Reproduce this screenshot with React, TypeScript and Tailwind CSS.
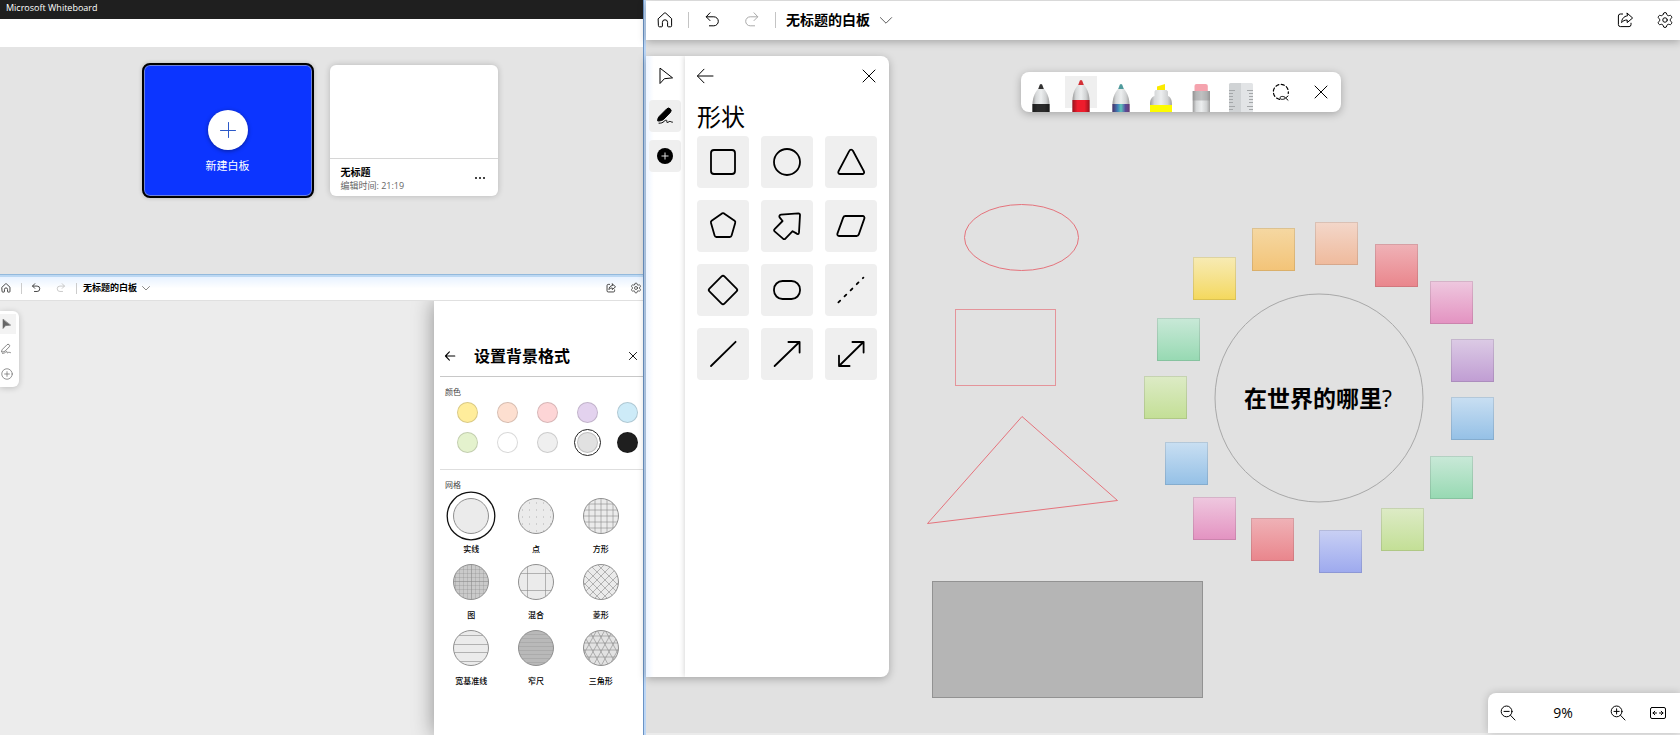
import * as React from "react";
import { Settings } from "lucide-react";

interface IconProps {
  className?: string;
}

interface Note {
  x: number;
  y: number;
  color: string;
}

const NOTE_COLORS = {
  orange: "from-[#f5d8a2] to-[#f3c377]",
  peach: "from-[#f3d7ca] to-[#efba9c]",
  red: "from-[#efb2b7] to-[#e9858c]",
  pink: "from-[#eec8df] to-[#e392c1]",
  purple: "from-[#dccbe5] to-[#c09dd3]",
  blue: "from-[#c9dff2] to-[#94c0e6]",
  green: "from-[#c9e9d8] to-[#96d9b2]",
  lime: "from-[#ddebc6] to-[#c3df95]",
  indigo: "from-[#c9d0f4] to-[#9da9ee]",
  yellow: "from-[#f7ebb4] to-[#f4d85a]",
};

// positions on the board, measured from its top left corner
const NOTES: Note[] = [
  { x: 606, y: 188, color: NOTE_COLORS.orange },
  { x: 669, y: 182, color: NOTE_COLORS.peach },
  { x: 729, y: 204, color: NOTE_COLORS.red },
  { x: 784, y: 241, color: NOTE_COLORS.pink },
  { x: 805, y: 299, color: NOTE_COLORS.purple },
  { x: 805, y: 357, color: NOTE_COLORS.blue },
  { x: 784, y: 416, color: NOTE_COLORS.green },
  { x: 735, y: 468, color: NOTE_COLORS.lime },
  { x: 673, y: 490, color: NOTE_COLORS.indigo },
  { x: 605, y: 478, color: NOTE_COLORS.red },
  { x: 547, y: 457, color: NOTE_COLORS.pink },
  { x: 519, y: 402, color: NOTE_COLORS.blue },
  { x: 498, y: 336, color: NOTE_COLORS.lime },
  { x: 511, y: 278, color: NOTE_COLORS.green },
  { x: 547, y: 217, color: NOTE_COLORS.yellow },
];

const SWATCHES = [
  { name: "黄色", className: "bg-[#ffed9b]" },
  { name: "橙色", className: "bg-[#fddfd0]" },
  { name: "粉色", className: "bg-[#fdd5d6]" },
  { name: "紫色", className: "bg-[#e3d2ee]" },
  { name: "蓝色", className: "bg-[#cdebf8]" },
  { name: "绿色", className: "bg-[#e4f2cd]" },
  { name: "白色", className: "bg-white" },
  { name: "浅灰", className: "bg-[#efefef]" },
  { name: "灰色", className: "bg-[#e1e1e1]" },
  { name: "黑色", className: "bg-[#1f1f1f]" },
];

const PATTERNS = [
  { name: "实线", fill: "#ebebeb", lines: "" },
  {
    name: "点",
    fill: "#ebebeb",
    lines:
      "M11 12h1M18 12h1M25 12h1M32 12h1M39 12h1M11 19h1M18 19h1M25 19h1M32 19h1M39 19h1M11 26h1M18 26h1M25 26h1M32 26h1M39 26h1M11 33h1M18 33h1M25 33h1M32 33h1M39 33h1M18 40h1M25 40h1M32 40h1",
  },
  {
    name: "方形",
    fill: "#ebebeb",
    lines:
      "M13 7v36M19 7v36M25 7v36M31 7v36M37 7v36M7 13h36M7 19h36M7 25h36M7 31h36M7 37h36",
  },
  {
    name: "图",
    fill: "#cacaca",
    lines: "M25.5 7v36M7 24.500h36",
    fine: "M9.500 7v36M13.500 7v36M17.500 7v36M21.500 7v36M29.500 7v36M33.500 7v36M37.500 7v36M7 12.500h36M7 16.500h36M7 20.500h36M7 28.500h36M7 32.500h36M7 36.500h36",
  },
  {
    name: "混合",
    fill: "#ebebeb",
    lines: "M16.500 7v36M34.500 7v36M7 16.500h36M7 33.500h36",
  },
  {
    name: "菱形",
    fill: "#ebebeb",
    lines:
      "M-3 7l36 36M5 7l36 36M13 7l36 36M21 7l36 36M-11 7l36 36M53 7l-36 36M45 7l-36 36M37 7l-36 36M29 7l-36 36M61 7l-36 36",
  },
  {
    name: "宽基准线",
    fill: "#ebebeb",
    lines: "M7 12.500h36M7 21.500h36M7 29.500h36M7 38.500h36",
  },
  {
    name: "窄尺",
    fill: "#b9b9b9",
    lines: "",
    fine: "M7 11.500h36M7 15.500h36M7 19.500h36M7 23.500h36M7 27.500h36M7 31.500h36M7 35.500h36M7 39.500h36",
  },
  {
    name: "三角形",
    fill: "#e2e2e2",
    lines:
      "M7 13h36M7 20h36M7 27h36M7 34h36M5 7l20 36M13 7l20 36M21 7l20 36M29 7l20 36M-3 7l20 36M45 7l-20 36M37 7l-20 36M29 7l-20 36M21 7l-20 36M53 7l-20 36",
  },
];

const SHAPES: { name: string; shape: React.ReactNode }[] = [
  { name: "正方形", shape: <rect x="14" y="14" width="24" height="24" rx="3" /> },
  { name: "圆形", shape: <circle cx="26" cy="26" r="13" /> },
  {
    name: "三角形",
    shape: (
      <path d="M24.3 14.8 13.4 35.5A1.8 1.8 0 0 0 15 38H37.4A1.8 1.8 0 0 0 39 35.5L27.9 14.8A2 2 0 0 0 24.3 14.8Z" />
    ),
  },
  {
    name: "五边形",
    shape: (
      <path d="M25 13.4 14.6 20.8A2 2 0 0 0 14 23L17.6 35.6A2 2 0 0 0 19.4 37H32.8A2 2 0 0 0 34.6 35.6L38.2 23A2 2 0 0 0 37.6 20.8L27 13.4A2 2 0 0 0 25 13.4Z" />
    ),
  },
  {
    name: "箭头",
    shape: (
      <path d="M20 14.6 37.4 13.4A1.6 1.6 0 0 1 39 15L38 32.4C37.8 34.4 36.4 34.6 35.4 33.4L31.6 31.2 24.4 38.6A1.6 1.6 0 0 1 22 38.6L13.6 31.4A1.4 1.4 0 0 1 13.6 29.2L21.6 21 18.8 17.6C17.8 16.4 18.4 14.8 20 14.6Z" />
    ),
  },
  {
    name: "平行四边形",
    shape: (
      <path d="M20.6 16H37.6A1.8 1.8 0 0 1 39.4 18.4L33.8 34.4A2.4 2.4 0 0 1 31.6 36H14A1.8 1.8 0 0 1 12.4 33.6L18.2 17.6A2.4 2.4 0 0 1 20.6 16Z" />
    ),
  },
  {
    name: "菱形",
    shape: (
      <rect x="15.4" y="15.4" width="21.2" height="21.2" rx="2" transform="rotate(45 26 26)" />
    ),
  },
  { name: "圆角矩形", shape: <rect x="13" y="17" width="26" height="18" rx="8.5" /> },
  { name: "虚线", shape: <path d="M13.4 38.4 38.4 13.6" strokeDasharray="2.5 6.1" /> },
  { name: "直线", shape: <path d="M14 38 38.6 13.8" /> },
  { name: "单向箭头", shape: <path d="M13.6 38 38.4 14M27.4 14H38.6V24.6" /> },
  {
    name: "双向箭头",
    shape: <path d="M14 38 38.4 14M27.4 14H38.6V24.6M14 27.6V38H24.6" />,
  },
];

function Icon({ className, children }: IconProps & { children: React.ReactNode }) {
  return (
    <svg
      viewBox="0 0 20 20"
      fill="none"
      stroke="currentColor"
      strokeLinecap="round"
      strokeLinejoin="round"
      aria-hidden="true"
      className={className}
    >
      {children}
    </svg>
  );
}

const HomeIcon = ({ className }: IconProps) => (
  <Icon className={className}>
    <path d="M3.4 8.6 9.2 3.2a1.2 1.2 0 0 1 1.6 0l5.8 5.4v7.2a1 1 0 0 1-1 1h-2.2a.8.8 0 0 1-.8-.8v-3.6a2.6 2.6 0 0 0-5.2 0V16a.8.8 0 0 1-.8.8H4.4a1 1 0 0 1-1-1Z" />
  </Icon>
);

const UndoIcon = ({ className }: IconProps) => (
  <Icon className={className}>
    <path d="M8 2.8 4.2 6.8 8 10.6M4.4 6.8h7.4a4.5 4.5 0 0 1 0 9H7.4" />
  </Icon>
);

const RedoIcon = ({ className }: IconProps) => (
  <Icon className={className}>
    <path d="m12 2.8 3.8 4-3.8 3.8M15.6 6.8H8.2a4.5 4.5 0 0 0 0 9h4.4" />
  </Icon>
);

const ChevronIcon = ({ className }: IconProps) => (
  <Icon className={className}>
    <path d="m3 7 7 7 7-7" />
  </Icon>
);

const ShareIcon = ({ className }: IconProps) => (
  <Icon className={className}>
    <path d="M7.6 4H5.4a2 2 0 0 0-2 2v8.6a2 2 0 0 0 2 2H14a2 2 0 0 0 2-2v-1.4" />
    <path d="M12.2 3.2 17.6 8l-5.4 4.6V10c-2.6 0-4.2.8-5.6 2.6.2-3.4 1.8-6.2 5.6-6.8Z" />
  </Icon>
);

const BackIcon = ({ className }: IconProps) => (
  <Icon className={className}>
    <path d="M9 3.2 2.4 10 9 16.8M2.6 10h15.4" />
  </Icon>
);

const CloseIcon = ({ className }: IconProps) => (
  <Icon className={className}>
    <path d="m4 4 12 12M16 4 4 16" />
  </Icon>
);

const CursorIcon = ({ className }: IconProps) => (
  <Icon className={className}>
    <path d="M5 2.5v15l4.4-4.800 7.800-.8Z" />
  </Icon>
);

const PenIcon = ({ className }: IconProps) => (
  <Icon className={className}>
    <path d="M2.600 14.400c.2-2 .8-3.200 2-4.400l7-7a2.500 2.500 0 0 1 3.800 3.400l-6.600 6.800c-1.200 1.200-3 1.600-5 1.800Z" />
    <path
      fill="none"
      d="M4 17.200c2.400 0 3.600-.4 5-1.800 1.600-1.600 3.200-1.600 2.800 0-.4 1.800 1.200 1 2.400.2 1.200-.8 1.600.6 3.200.6"
    />
  </Icon>
);

const PlusCircleIcon = ({ className }: IconProps) => (
  <Icon className={className}>
    <circle cx="10" cy="10" r="7.500" />
    <path d="M6.6 10h6.8M10 6.6v6.8" />
  </Icon>
);

function ZoomIcon({ className, plus }: IconProps & { plus?: boolean }) {
  return (
    <Icon className={className}>
      <circle cx="8.6" cy="8.4" r="5.4" />
      <path d="M12.6 12.4 17 17M6 8.4h5.2" />
      {plus && <path d="M8.6 5.8V11" />}
    </Icon>
  );
}

function Pen({ tip, band, raised }: { tip: string; band: string; raised?: boolean }) {
  return (
    <svg viewBox="0 0 40 40" className="size-10" aria-hidden="true">
      <g transform={raised ? "translate(0 -4)" : undefined}>
        <path d="M17.3 16.5C13 22 11.5 27 11.5 33V44H28.5V33C28.5 27 27 22 22.7 16.5Z" fill="url(#barrel)" />
        <path d="M17.2 17 18.8 12.8Q20 11.2 21.2 12.8L22.800 17Z" fill={tip} />
        <path d="M11.5 32H28.5V44H11.5Z" fill={band} />
        <path d="M11.5 32H28.5V44H11.5Z" fill="url(#shade)" />
      </g>
    </svg>
  );
}

function Highlighter() {
  return (
    <svg viewBox="0 0 40 40" className="size-10" aria-hidden="true">
      <path d="M16 14.5 24 12V18.5H16Z" fill="#fbea00" />
      <path d="M14.5 18H25.5L27 19.5V24C30 25.5 31 28 31 33H9C9 28 10 25.5 13.5 24V19.500Z" fill="url(#barrel)" />
      <path d="M9 33H31V40H9Z" fill="#fdfb00" />
    </svg>
  );
}

function Eraser() {
  return (
    <svg viewBox="0 0 40 40" className="size-10" aria-hidden="true">
      <path d="M13.5 20V14Q13.5 12 15.5 12H24.5Q26.8 12 26.8 14V20Z" fill="#f5a3ae" />
      <path d="M11.7 19H29V40H11.7Z" fill="url(#barrel)" />
      <path d="M11.7 19H29V28.5H11.7Z" fill="#8a8a8a" fillOpacity="0.45" />
    </svg>
  );
}

function Ruler() {
  return (
    <svg viewBox="0 0 40 40" className="size-10" aria-hidden="true">
      <path d="M8 40V12.5Q8 11 9.5 11H20V40Z" fill="#d0d3d5" />
      <path d="M32 40V12.5Q32 11 30.5 11H20V40Z" fill="#e2e4e6" />
      <path
        d="M8 18.5h6M8 21.5h4M8 24.5h4M8 27.5h4M8 30.5h4M8 34.5h6M8 37.5h4M32 18.5h-6M32 21.5h-4M32 24.5h-4M32 27.5h-4M32 30.5h-4M32 34.5h-6M32 37.5h-4"
        stroke="#a4a7a9"
      />
    </svg>
  );
}

function HomeWindow() {
  return (
    <section className="flex h-[274px] flex-col bg-[#e4e4e4]">
      <header className="h-[19px] bg-[#1f1f1f] px-1.5 text-[9px] leading-4 text-white">
        Microsoft Whiteboard
      </header>
      <div className="h-7 bg-white" />
      <div className="flex justify-center gap-4 pt-4 pr-1">
        <button className="flex h-[135px] w-[172px] flex-col items-center rounded-lg border-2 border-black bg-[#0c35ff] pt-[45px] text-[11px] text-white shadow-[inset_0_0_0_1px_#6f82d8,0_0_4px_#0003]">
          <span className="flex size-10 items-center justify-center rounded-full bg-white text-[#2b58c8] shadow-[0_1px_4px_#0006]">
            <Icon className="size-5">
              <path d="M2.5 10.5h15M10.5 2.5v15" />
            </Icon>
          </span>
          <span className="mt-2 leading-4">新建白板</span>
        </button>
        <article className="mt-0.5 flex h-[131px] w-[168px] flex-col rounded-md bg-white shadow-[0_0_6px_#0003]">
          <div className="flex-1 border-b border-[#d6d6d6]" />
          <div className="flex h-[37px] items-center justify-between pr-3 pl-[11px]">
            <div>
              <h2 className="text-[10px] leading-4 font-bold">无标题</h2>
              <p className="text-[9px] leading-3 text-[#666]">编辑时间: 21:19</p>
            </div>
            <button aria-label="更多选项">
              <svg viewBox="0 0 12 4" className="h-1 w-3" aria-hidden="true">
                <path d="M1 1h2v2H1zM5 1h2v2H5zM9 1h2v2H9z" fill="#444" />
              </svg>
            </button>
          </div>
        </article>
      </div>
    </section>
  );
}

function BackgroundPanel() {
  return (
    <aside className="w-[209px] shrink-0 bg-white pt-[43px] pl-1.5 shadow-[0_0_20px_#0006]">
      <header className="flex items-center border-b border-[#c8c8c8] pr-1 pb-2 pl-1">
        <button aria-label="返回">
          <BackIcon className="size-3 stroke-[1.8]" />
        </button>
        <h2 className="flex-1 pl-[18px] text-base leading-6 font-bold">设置背景格式</h2>
        <button aria-label="关闭">
          <CloseIcon className="size-3 stroke-[1.5]" />
        </button>
      </header>
      <fieldset className="border-b border-[#dedede] pb-4 pl-[5px]">
        <legend className="pt-[9px] text-[8px] leading-3 text-[#444]">颜色</legend>
        <div className="mt-1 grid grid-cols-[repeat(5,21px)] gap-x-[19px] gap-y-[9px] pl-3">
          {SWATCHES.map((swatch, index) => (
            <input
              key={index}
              type="radio"
              name="color"
              aria-label={swatch.name}
              defaultChecked={index === 8}
              className={`size-[21px] appearance-none rounded-full border border-black/15 outline-[#222] checked:outline checked:outline-offset-2 ${swatch.className}`}
            />
          ))}
        </div>
      </fieldset>
      <fieldset>
        <legend className="pt-[9px] pl-[5px] text-[8px] leading-3 text-[#444]">网格</legend>
        <div className="-ml-px grid grid-cols-3 pr-2.5">
          {PATTERNS.map((pattern, index) => (
            <label
              key={index}
              className="relative flex flex-col items-center text-[8px] leading-4 font-medium"
            >
              <input
                type="radio"
                name="pattern"
                defaultChecked={index === 0}
                className="sr-only"
              />
              <svg viewBox="0 0 50 50" className="size-[50px]" aria-hidden="true">
                <clipPath id={`pattern-${index}`}>
                  <circle cx="25" cy="25" r="17.500" />
                </clipPath>
                <circle cx="25" cy="25" r="17.500" fill={pattern.fill} />
                <g stroke="#8a8a8a" clipPath={`url(#pattern-${index})`}>
                  <path d={pattern.lines} strokeOpacity="0.6" />
                  {pattern.fine && <path d={pattern.fine} strokeOpacity="0.3" />}
                </g>
                <circle cx="25" cy="25" r="17.500" fill="none" stroke="#909090" />
                {index === 0 && (
                  <circle cx="25" cy="25" r="23.800" fill="none" stroke="#111" strokeWidth="1.3" />
                )}
              </svg>
              {pattern.name}
            </label>
          ))}
        </div>
      </fieldset>
    </aside>
  );
}

function SettingsWindow() {
  return (
    <section className="flex flex-1 flex-col border-t border-[#93b9dc] bg-[#ececec]">
      <header className="flex h-[25px] items-center border-t-2 border-[#bcd8f3] bg-gradient-to-b from-[#e8f2ff] via-white to-white pb-px text-[#333]">
        <button aria-label="主页">
          <HomeIcon className="size-3 stroke-[1.5]" />
        </button>
        <span className="ml-[9px] h-[11px] w-px bg-[#ccc]" />
        <button aria-label="撤消" className="ml-2">
          <UndoIcon className="size-3 stroke-[1.5]" />
        </button>
        <button aria-label="恢复" className="ml-[13px] text-[#c4c4c4]">
          <RedoIcon className="size-3 stroke-[1.5]" />
        </button>
        <span className="ml-[9px] h-[11px] w-px bg-[#ccc]" />
        <button className="ml-1.5 flex items-center gap-1 text-[9px] leading-4 font-bold text-black">
          无标题的白板
          <ChevronIcon className="size-2.5 stroke-2 text-[#888]" />
        </button>
        <button aria-label="共享" className="mr-[13px] ml-auto">
          <ShareIcon className="size-3 stroke-[1.5]" />
        </button>
        <button aria-label="设置" className="mr-px">
          <Settings className="size-3 stroke-[1.5]" />
        </button>
      </header>
      <div className="flex flex-1 items-stretch justify-between overflow-hidden border-t border-[#e0e0e0]">
        <nav className="mt-2.5 flex w-[19px] flex-col gap-[5px] self-start rounded-r-md bg-white py-[3px] text-[#666] shadow-[0_1px_6px_#0003]">
          <button aria-label="选择" className="h-5 w-4 bg-[#f3f3f3]">
            <CursorIcon className="size-3 fill-current" />
          </button>
          <button aria-label="墨迹书写" className="h-5 w-4">
            <PenIcon className="size-3 stroke-[1.3]" />
          </button>
          <button aria-label="创建" className="h-5 w-4">
            <PlusCircleIcon className="size-3.5" />
          </button>
        </nav>
        <BackgroundPanel />
      </div>
    </section>
  );
}

function ShapesPanel() {
  return (
    <div className="relative mt-4 mb-14 flex overflow-hidden rounded-r-lg bg-white shadow-[0_2px_8px_#0004]">
      <nav className="flex w-[39px] flex-col items-center gap-2 bg-gradient-to-r from-[#edf4ff] via-white via-20% to-white pt-1 pr-px">
        <button aria-label="选择" className="flex size-8 items-center justify-center rounded">
          <CursorIcon className="size-5" />
        </button>
        <button
          aria-label="墨迹书写"
          className="flex size-8 items-center justify-center rounded bg-[#efefef]"
        >
          <PenIcon className="size-5 fill-black" />
        </button>
        <button
          aria-label="创建"
          className="flex size-8 items-center justify-center rounded bg-[#efefef]"
        >
          <svg viewBox="0 0 20 20" className="size-5" aria-hidden="true">
            <circle cx="10" cy="10" r="8" />
            <path d="M6.5 10h7M10 6.5v7" stroke="#ddd" />
          </svg>
        </button>
      </nav>
      <section className="px-3 pt-2.5 shadow-[0_0_6px_#0003]">
        <header className="-mx-0.5 flex justify-between">
          <button aria-label="返回">
            <BackIcon className="size-5" />
          </button>
          <button aria-label="关闭">
            <CloseIcon className="size-5" />
          </button>
        </header>
        <h2 className="mt-[15px] mb-[3px] text-2xl leading-8">形状</h2>
        <div className="grid grid-cols-3 gap-3">
          {SHAPES.map((item, index) => (
            <button key={index} aria-label={item.name} className="rounded bg-[#efefef]">
              <svg
                viewBox="0 0 52 52"
                fill="none"
                stroke="black"
                strokeWidth="1.8"
                strokeLinecap="round"
                strokeLinejoin="round"
                className="size-[52px]"
                aria-hidden="true"
              >
                {item.shape}
              </svg>
            </button>
          ))}
        </div>
      </section>
    </div>
  );
}

function InkToolbar() {
  return (
    <div className="absolute inset-x-0 top-8 flex justify-center pl-9">
      <div role="toolbar" className="flex overflow-hidden rounded-lg bg-white shadow-[0_2px_8px_#0004]">
        <svg className="absolute size-0" aria-hidden="true">
          <linearGradient id="barrel">
            <stop offset="0" stopColor="#9a9a9a" />
            <stop offset="0.2" stopColor="#d5d7d8" />
            <stop offset="0.5" stopColor="#eceeef" />
            <stop offset="0.8" stopColor="#d0d2d3" />
            <stop offset="1" stopColor="#a0a0a0" />
          </linearGradient>
          <linearGradient id="shade">
            <stop offset="0" stopColor="#000" stopOpacity="0.35" />
            <stop offset="0.3" stopColor="#000" stopOpacity="0" />
            <stop offset="0.7" stopColor="#000" stopOpacity="0" />
            <stop offset="1" stopColor="#000" stopOpacity="0.35" />
          </linearGradient>
          <linearGradient id="galaxy">
            <stop offset="0" stopColor="#6a4fa0" />
            <stop offset="0.3" stopColor="#3f7fb8" />
            <stop offset="0.5" stopColor="#5cc6b8" />
            <stop offset="0.75" stopColor="#5a51a4" />
            <stop offset="1" stopColor="#9a5aae" />
          </linearGradient>
        </svg>
        <button aria-label="黑色笔">
          <Pen tip="#333" band="#2a2a2a" />
        </button>
        <button
          aria-label="红色笔"
          className="bg-[radial-gradient(#efefef,#efefef)] bg-[length:32px_32px] bg-center bg-no-repeat"
        >
          <Pen tip="#d32f35" band="#ee1c2c" raised />
        </button>
        <button aria-label="银河笔">
          <Pen tip="#4f9a9c" band="url(#galaxy)" />
        </button>
        <button aria-label="荧光笔">
          <Highlighter />
        </button>
        <button aria-label="橡皮擦">
          <Eraser />
        </button>
        <button aria-label="标尺">
          <Ruler />
        </button>
        <button aria-label="套索选择" className="flex size-10 items-center justify-center">
          <Icon className="size-5">
            <path
              d="M8.500 17.300A7.500 7.500 0 1 1 17.200 11.500"
              strokeDasharray="3.2 2.4"
              strokeWidth="1.2"
            />
            <path d="M17 18.200 14.600 16C13.600 17.600 9 18 9 16 9 13.800 13.400 14 14.600 16L17 14" />
          </Icon>
        </button>
        <button aria-label="关闭" className="flex size-10 items-center justify-center">
          <CloseIcon className="size-5" />
        </button>
      </div>
    </div>
  );
}

function Board() {
  return (
    <div className="absolute inset-0 overflow-hidden">
      <svg className="size-full" fill="none" stroke="#e5737c" aria-hidden="true">
        <ellipse cx="375.5" cy="197.5" rx="57" ry="33" />
        <rect x="309.5" y="269.5" width="100" height="76" strokeOpacity="0.7" />
        <path d="M376 376.5 471.5 460.5 281.5 483.5Z" />
        <rect x="286.5" y="541.5" width="270" height="116" fill="#b5b5b5" stroke="#929292" />
        <circle cx="673" cy="358" r="104" stroke="#a8a8a8" />
      </svg>
      {NOTES.map((note, index) => (
        <div
          key={index}
          className={`absolute size-[43px] border border-black/10 bg-gradient-to-b bg-origin-border ${note.color}`}
          style={{ left: note.x, top: note.y }}
        />
      ))}
      <p className="absolute top-[342px] left-[598px] text-[23px] leading-8 font-bold">
        在世界的哪里<span className="font-medium">?</span>
      </p>
    </div>
  );
}

function BoardWindow() {
  return (
    <section className="flex min-w-0 flex-col border-t border-b-2 border-[#ebebeb] bg-[#e1e1e1]">
      <header className="relative z-10 flex h-[39px] items-center bg-white pb-px pl-[9px] shadow-[0_2px_8px_#0004]">
        <button aria-label="主页">
          <HomeIcon className="size-5" />
        </button>
        <span className="ml-[13px] h-4 w-px bg-[#c4c4c4]" />
        <button aria-label="撤消" className="ml-[13px]">
          <UndoIcon className="size-5" />
        </button>
        <button aria-label="恢复" className="ml-5 text-[#aaa]">
          <RedoIcon className="size-5" />
        </button>
        <span className="ml-[13px] h-4 w-px bg-[#c4c4c4]" />
        <button className="ml-2.5 flex items-center gap-2 text-sm font-bold">
          无标题的白板
          <ChevronIcon className="size-4 text-[#333]" />
        </button>
        <button aria-label="共享" className="mr-[21px] ml-auto">
          <ShareIcon className="size-5" />
        </button>
        <button aria-label="设置" className="mr-1.5">
          <Settings className="size-[18px] stroke-[1.3]" />
        </button>
      </header>
      <main className="relative flex flex-1 items-stretch justify-between">
        <Board />
        <ShapesPanel />
        <InkToolbar />
        <div className="relative flex h-10 w-48 items-center self-end rounded-tl-lg bg-white pr-3 pl-2.5 text-sm shadow-[0_0_8px_#0003]">
          <button aria-label="缩小">
            <ZoomIcon className="size-5" />
          </button>
          <output className="flex-1 text-center">9%</output>
          <button aria-label="放大">
            <ZoomIcon className="size-5" plus />
          </button>
          <button aria-label="适应屏幕" className="ml-5">
            <Icon className="size-5">
              <rect x="2.5" y="4.5" width="15" height="11" rx="1.500" />
              <path d="M8.5 10H5M6.8 8.2 5 10l1.8 1.8M11.5 10H15M13.2 8.2 15 10l-1.8 1.8" />
            </Icon>
          </button>
        </div>
      </main>
    </section>
  );
}

export default function App() {
  return (
    <div className="grid min-h-screen grid-cols-[643fr_3px_1034fr] bg-white font-['Open_Sans','Noto_Sans_CJK_SC',sans-serif] text-black">
      <div className="flex min-w-0 flex-col">
        <HomeWindow />
        <SettingsWindow />
      </div>
      <div className="border-l border-[#6b93c4] bg-[#bcd6f5]" />
      <BoardWindow />
    </div>
  );
}
